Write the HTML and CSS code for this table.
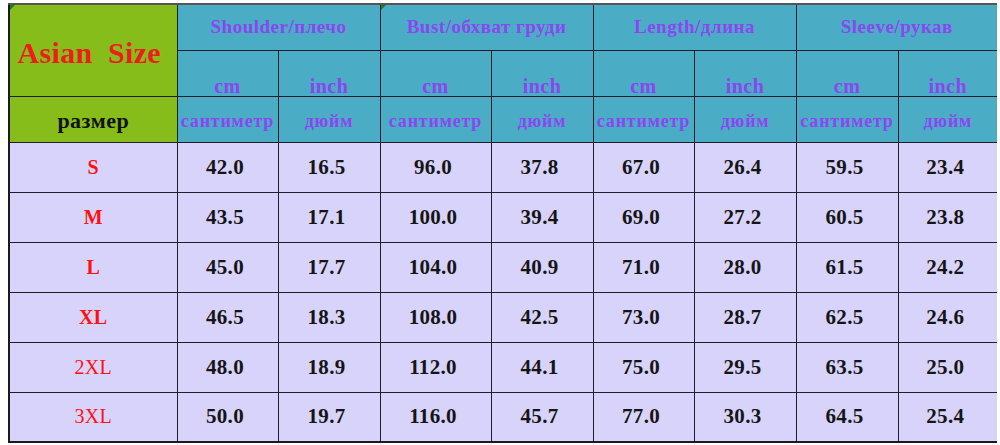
FILE: index.html
```html
<!DOCTYPE html>
<html>
<head>
<meta charset="utf-8">
<link rel="stylesheet" href="styles.css">
</head>
<body>
<table class="size-table">
  <colgroup>
    <col class="c-size"><col class="c-a"><col class="c-b"><col class="c-c"><col class="c-d"><col class="c-e"><col class="c-f"><col class="c-g"><col class="c-h">
  </colgroup>
  <thead>
    <tr class="h1">
      <th class="green title mark" rowspan="2">Asian&nbsp; Size</th>
      <th class="blue grp" colspan="2">Shoulder/плечо</th>
      <th class="blue grp mark" colspan="2">Bust/обхват груди</th>
      <th class="blue grp" colspan="2">Length/длина</th>
      <th class="blue grp" colspan="2">Sleeve/рукав</th>
    </tr>
    <tr class="h2">
      <th class="blue unit">cm</th><th class="blue unit">inch</th>
      <th class="blue unit">cm</th><th class="blue unit">inch</th>
      <th class="blue unit">cm</th><th class="blue unit">inch</th>
      <th class="blue unit">cm</th><th class="blue unit">inch</th>
    </tr>
    <tr class="h3">
      <th class="green ru">размер</th>
      <th class="blue runit">сантиметр</th><th class="blue runit">дюйм</th>
      <th class="blue runit">сантиметр</th><th class="blue runit">дюйм</th>
      <th class="blue runit">сантиметр</th><th class="blue runit">дюйм</th>
      <th class="blue runit">сантиметр</th><th class="blue runit">дюйм</th>
    </tr>
  </thead>
  <tbody>
    <tr><td class="sz">S</td><td>42.0</td><td>16.5</td><td>96.0</td><td>37.8</td><td>67.0</td><td>26.4</td><td>59.5</td><td>23.4</td></tr>
    <tr><td class="sz">M</td><td>43.5</td><td>17.1</td><td>100.0</td><td>39.4</td><td>69.0</td><td>27.2</td><td>60.5</td><td>23.8</td></tr>
    <tr><td class="sz">L</td><td>45.0</td><td>17.7</td><td>104.0</td><td>40.9</td><td>71.0</td><td>28.0</td><td>61.5</td><td>24.2</td></tr>
    <tr><td class="sz">XL</td><td>46.5</td><td>18.3</td><td>108.0</td><td>42.5</td><td>73.0</td><td>28.7</td><td>62.5</td><td>24.6</td></tr>
    <tr><td class="sz light">2XL</td><td>48.0</td><td>18.9</td><td>112.0</td><td>44.1</td><td>75.0</td><td>29.5</td><td>63.5</td><td>25.0</td></tr>
    <tr><td class="sz light">3XL</td><td>50.0</td><td>19.7</td><td>116.0</td><td>45.7</td><td>77.0</td><td>30.3</td><td>64.5</td><td>25.4</td></tr>
  </tbody>
</table>
</body>
</html>
```

FILE: styles.css
```css
html, body {
  background: #ffffff;
}
body {
  margin: 3px 3px 0 8px;
  font-family: "Liberation Serif", "Times New Roman", serif;
}
.size-table {
  border-collapse: collapse;
  table-layout: fixed;
  width: 990px;
  border: 2px solid #1a1a1a;
  border-top: 2px solid #555;
}
.c-size { width: 168px; }
.c-a { width: 101px; }
.c-b { width: 102px; }
.c-c { width: 111px; }
.c-d { width: 102px; }
.c-e { width: 101px; }
.c-f { width: 102px; }
.c-g { width: 102px; }
.c-h { width: 100px; }

th, td {
  border: 1px solid #1e1e2a;
  padding: 0;
  text-align: center;
  white-space: nowrap;
  overflow: hidden;
}
.green { background: #87bd1a; }
.blue { background: #4bacc5; color: #8d45f2; }
.mark { position: relative; }
.mark::before {
  content: "";
  position: absolute;
  left: 0;
  top: 0;
  border-top: 5px solid #1f7a2a;
  border-right: 5px solid transparent;
}
.h1 { height: 46px; }
.h2 { height: 46px; }
.h3 { height: 46px; }
.title {
  color: #ee1c1c;
  font-size: 30px;
  font-weight: bold;
  letter-spacing: 0.3px;
  vertical-align: middle;
  padding-top: 6px;
  padding-right: 8px;
}
.grp {
  font-size: 19px;
  font-weight: bold;
  letter-spacing: 0.5px;
}
.unit {
  font-size: 20px;
  font-weight: bold;
  letter-spacing: 0.5px;
  line-height: 16px;
  vertical-align: bottom;
  padding-bottom: 2px;
}
.ru {
  color: #111;
  font-size: 22px;
  font-weight: bold;
  letter-spacing: 0.5px;
  padding-top: 4px;
}
.runit {
  font-size: 18px;
  font-weight: bold;
  letter-spacing: 0.8px;
  padding-top: 4px;
}
tbody tr { height: 50px; }
tbody td {
  background: #d8d3fb;
  color: #151515;
  font-size: 21px;
  font-weight: bold;
  letter-spacing: 0.3px;
  padding-right: 5px;
}
tbody td.sz {
  color: #ff1010;
  font-size: 20px;
  padding-right: 0;
}
tbody td.sz.light {
  font-weight: normal;
}
```
